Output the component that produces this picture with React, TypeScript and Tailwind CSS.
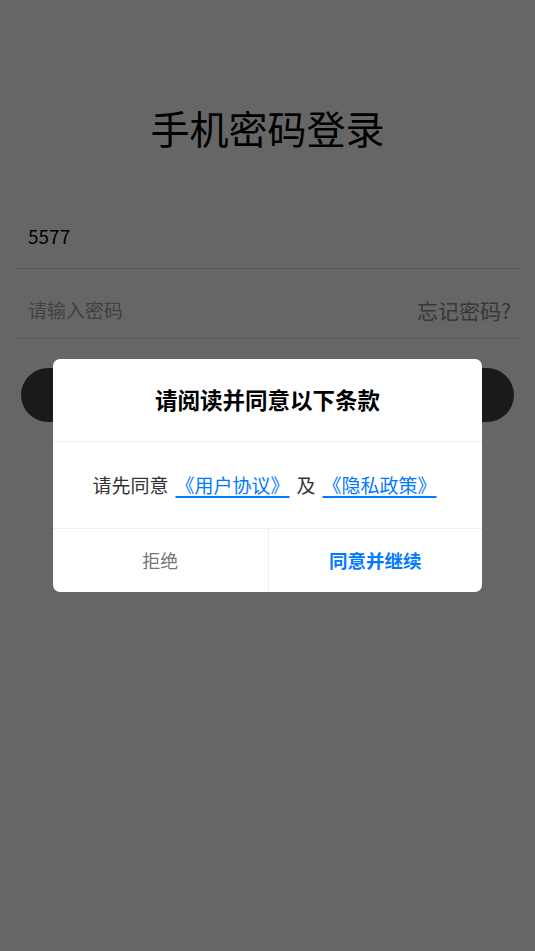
export default function App() {
  return (
    <div className="relative h-[951px] overflow-hidden bg-white font-['Noto_Sans_CJK_SC','Noto_Sans',sans-serif] text-black">
      <h1 className="pt-[104px] text-center text-[39px] leading-[47px] font-normal">手机密码登录</h1>

      <div className="mx-[14px] mt-[48px]">
        <div className="flex h-[70px] items-center border-b border-[#e2e2e2] px-[14px] pt-[6px] text-[19px]">5577</div>
        <div className="flex h-[70px] items-center justify-between border-b border-[#e2e2e2] pl-[14px] pr-[10px] pt-[14px]">
          <span className="text-[19px] text-[#a3a3a3]">请输入密码</span>
          <span className="text-[21px] text-[#8a8a8a]">忘记密码?</span>
        </div>
        <div className="mx-[7px] mt-[29px] h-[54px] rounded-full bg-[#424242]" />
      </div>

      <div className="absolute inset-0 flex items-center justify-center bg-black/60">
        <div className="w-[429px] overflow-hidden rounded-[7px] bg-white">
          <div className="flex h-[83px] items-center justify-center border-b border-[#eeeeee] text-[22.5px] font-bold text-black">
            请阅读并同意以下条款
          </div>
          <div className="flex h-[87px] items-center justify-center border-b border-[#eeeeee] text-[19px] text-[#333]">
            <p className="pr-[6px]">
              请先同意
              <a className="mx-[7px] text-[#007aff] underline decoration-2 underline-offset-[3px]">《用户协议》</a>
              及
              <a className="ml-[7px] text-[#007aff] underline decoration-2 underline-offset-[3px]">《隐私政策》</a>
            </p>
          </div>
          <div className="grid h-[63px] grid-cols-2 text-[18px]">
            <button className="flex items-center justify-center text-[#777]">拒绝</button>
            <button className="flex items-center justify-center border-l border-[#eeeeee] text-[18.5px] font-bold text-[#007aff]">同意并继续</button>
          </div>
        </div>
      </div>
    </div>
  );
}
